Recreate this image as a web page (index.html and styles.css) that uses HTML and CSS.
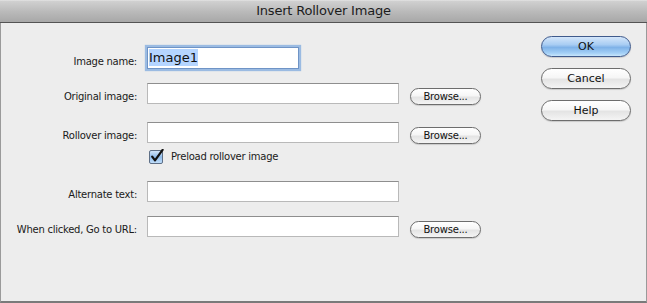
FILE: index.html
```html
<!DOCTYPE html>
<html lang="en">
<head>
    <meta charset="UTF-8">
    <meta name="viewport" content="width=device-width, initial-scale=1.0">
    <title>Insert Rollover Image</title>
    <link rel="stylesheet" href="styles.css">
</head>
<body>
    <div class="window">
        <div class="title-bar">Insert Rollover Image</div>

        <div class="content">
            <div class="form">
                <div class="row row-name">
                    <label class="label">Image name:</label>
                    <div class="field field-short focused"><span class="selected">Image1</span></div>
                </div>
                <div class="row row-original">
                    <label class="label">Original image:</label>
                    <div class="field"></div>
                    <button class="btn browse">Browse...</button>
                </div>
                <div class="row row-rollover">
                    <label class="label">Rollover image:</label>
                    <div class="field"></div>
                    <button class="btn browse">Browse...</button>
                </div>
                <div class="row row-check">
                    <div class="label"></div>
                    <div class="check">
                        <svg class="check-box" width="15" height="15" viewBox="0 0 15 15">
                            <defs>
                                <linearGradient id="cb" x1="0" y1="0" x2="0" y2="1">
                                    <stop offset="0" stop-color="#d6e8fb"/>
                                    <stop offset="0.5" stop-color="#8fbcec"/>
                                    <stop offset="1" stop-color="#c4e0fb"/>
                                </linearGradient>
                            </defs>
                            <rect x="0.5" y="1.5" width="13" height="13" rx="1.5" fill="url(#cb)" stroke="#5e6f86"/>
                            <path d="M3.2 7.6 L6 11.4 L13.6 0.8" fill="none" stroke="#111" stroke-width="2.2" stroke-linecap="round" stroke-linejoin="round"/>
                        </svg>
                        <span>Preload rollover image</span>
                    </div>
                </div>
                <div class="row row-alt">
                    <label class="label">Alternate text:</label>
                    <div class="field"></div>
                </div>
                <div class="row row-url">
                    <label class="label">When clicked, Go to URL:</label>
                    <div class="field"></div>
                    <button class="btn browse">Browse...</button>
                </div>
            </div>

            <div class="actions">
                <button class="btn action default">OK</button>
                <button class="btn action">Cancel</button>
                <button class="btn action">Help</button>
            </div>
        </div>
    </div>
</body>
</html>
```

FILE: styles.css
```css
body {
    margin: 0;
    background: #ececec;
    font-family: "DejaVu Sans", "Liberation Sans", sans-serif;
    font-size: 10px;
    color: #1a1a1a;
}

.window {
    width: 647px;
    height: 303px;
    box-sizing: border-box;
    display: flex;
    flex-direction: column;
    background: #ededed;
    border-left: 1px solid #9a9a9a;
    border-right: 1px solid #9a9a9a;
    border-bottom: 2px solid #7a7a7a;
}

.title-bar {
    height: 22px;
    line-height: 22px;
    text-align: center;
    font-size: 13px;
    letter-spacing: -0.2px;
    color: #1c1c1c;
    background: linear-gradient(#e6e6e6 0, #d0d0d0 6%, #b9b9b9 55%, #a8a8a8 100%);
    border-bottom: 1px solid #545454;
    margin: 0 -1px;
}

.content {
    flex: 1;
    display: flex;
}

.form {
    flex: 1;
    padding-top: 24px;
    letter-spacing: -0.25px;
}

.row {
    display: flex;
    align-items: flex-start;
}

.label {
    width: 136px;
    padding-right: 10px;
    text-align: right;
    line-height: 21px;
    padding-top: 3px;
    flex: none;
}

.field {
    width: 250px;
    height: 19px;
    background: #fff;
    border: 1px solid #b9b9b9;
    border-top-color: #8e8e8e;
    flex: none;
}

.field-short {
    width: 149px;
    height: 20px;
    font-size: 13px;
    line-height: 20px;
    letter-spacing: 0;
    padding-left: 1px;
    box-sizing: content-box;
}

.focused {
    border-color: #6f94c6;
    box-shadow: 0 0 1px 2px #9bbbe2;
}

.selected {
    background: #b5d5ff;
    color: #111;
    padding: 1px 0;
}

.row-name { height: 36px; }
.row-name .label { padding-top: 4px; }
.row-original { height: 39px; }
.row-rollover { height: 28px; }
.row-check { height: 31px; }
.row-alt { height: 35px; }

.btn {
    font-family: "DejaVu Sans", "Liberation Sans", sans-serif;
    color: #111;
    border: 1px solid #6d6d6d;
    border-radius: 10px;
    background: linear-gradient(#ffffff 0, #f6f6f6 45%, #e4e4e4 55%, #f4f4f4 100%);
    box-shadow: 0 1px 1px rgba(0, 0, 0, 0.15);
    padding: 0;
    cursor: default;
}

.browse {
    width: 71px;
    height: 17px;
    margin-left: 11px;
    margin-top: 5px;
    font-size: 10px;
    line-height: 14px;
    letter-spacing: -0.2px;
}

.check {
    display: flex;
    align-items: center;
    gap: 7px;
    margin-left: 2px;
    height: 15px;
    margin-top: -1px;
}

.actions {
    display: flex;
    flex-direction: column;
    gap: 11px;
    padding-top: 13px;
    margin-right: 15px;
}

.action {
    width: 90px;
    height: 21px;
    font-size: 11px;
    border-radius: 11px;
}

.default {
    border-color: #3f5a8c;
    background: linear-gradient(#d4e6fa 0, #a9cdf3 40%, #7fb2e8 55%, #a4d0f6 85%, #c8e6fb 100%);
}
```
